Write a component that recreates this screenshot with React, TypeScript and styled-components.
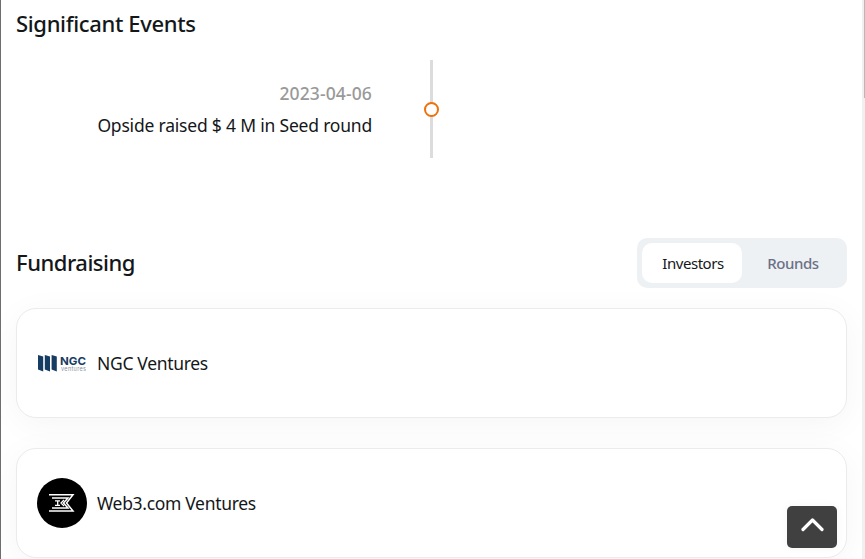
import React from "react";
import styled, { createGlobalStyle } from "styled-components";

const GlobalStyle = createGlobalStyle`
  * { box-sizing: border-box; }
  body {
    margin: 0;
    overflow: hidden;
    background: #fff;
    color: #141719;
    font-family: "Noto Sans", "Open Sans", sans-serif;
  }
`;

const Page = styled.div`
  display: grid;
  grid-template-columns: minmax(0, 1fr) 3px;
  height: 559px;
  overflow: hidden;
  border-left: 1px solid #6e6e70;
`;

const Content = styled.main`
  padding: 0 15px;
`;

const ScrollTrack = styled.div`
  display: flex;
  justify-content: flex-end;
  background: #f0f0f0;
`;

const ScrollThumb = styled.div`
  width: 1px;
  height: 98px;
  background: #b8b8b8;
`;

const Heading = styled.h2<{ $spacing: string }>`
  margin: 0;
  font-size: 22px;
  font-weight: 500;
  line-height: 30px;
  letter-spacing: ${(p) => p.$spacing};
  white-space: nowrap;
`;

const EventsSection = styled.section`
  height: 238px;
  padding-top: 8px;
`;

const Timeline = styled.div`
  display: grid;
  grid-template-columns: 356px 119px;
  height: 98px;
  margin-top: 22px;
`;

const Event = styled.div`
  display: flex;
  flex-direction: column;
  align-items: flex-end;
  padding-top: 17px;
  line-height: 32px;
  white-space: nowrap;
`;

const EventDate = styled.time`
  color: #999;
  font-size: 17.5px;
  font-weight: 500;
  letter-spacing: 0.12px;
`;

const EventTitle = styled.div`
  font-size: 17.5px;
  letter-spacing: -0.2px;
`;

const Rail = styled.div`
  display: flex;
  align-items: center;
  justify-content: center;
  background: linear-gradient(#dcdcdc, #dcdcdc) center / 3px 100% no-repeat;
`;

const RailDot = styled.div`
  width: 15px;
  height: 15px;
  border: 2px solid #ee720c;
  border-radius: 50%;
  background: #fff;
`;

const FundHeader = styled.header`
  display: flex;
  align-items: center;
  justify-content: space-between;
  height: 50px;
  margin-bottom: 20px;

  ${Heading} {
    padding-bottom: 2px;
  }
`;

const Tabs = styled.div`
  display: flex;
  width: 210px;
  height: 50px;
  padding: 5px;
  border-radius: 10px;
  background: #eef1f4;
`;

const Tab = styled.button<{ $active?: boolean }>`
  flex: 1;
  padding: 0 0 0 2px;
  border: 0;
  border-radius: 10px;
  background: ${(p) => (p.$active ? "#fff" : "transparent")};
  color: ${(p) => (p.$active ? "#141719" : "#6b7086")};
  font: ${(p) => (p.$active ? 400 : 500)} 15px "Noto Sans", sans-serif;
  letter-spacing: -0.45px;
`;

const Card = styled.article`
  display: flex;
  align-items: center;
  gap: 10px;
  height: 110px;
  margin-bottom: 30px;
  padding: 0 20px;
  border: 1px solid #ebebeb;
  border-radius: 20px;
  background: #fff;
  box-shadow: 0 6px 34px rgba(0, 0, 0, 0.045);
`;

const Logo = styled.svg`
  display: block;
  flex: none;
  width: 50px;
  height: 50px;
`;

const InvestorName = styled.div`
  padding-bottom: 1px;
  font-size: 17.5px;
  line-height: 24px;
  letter-spacing: -0.32px;
`;

const TopButton = styled.button`
  position: fixed;
  right: 28px;
  bottom: 11px;
  display: grid;
  place-items: center;
  width: 50px;
  height: 42px;
  padding: 0 0 4px;
  border: 0;
  border-radius: 5px;
  background: #404040;
  box-shadow: 0 0 10px rgba(0, 0, 0, 0.05);
`;

function NgcLogo() {
  return (
    <Logo viewBox="0 0 50 50" aria-label="NGC Ventures">
      <g fill="#173c63">
        <path d="M1 17l5.2 1.6v15L1 31.5z" />
        <path d="M7.8 17l5.2 1.6v15l-5.2-2.1z" />
        <path d="M14.6 17l5.2 1.6v15l-5.2-2.1z" />
      </g>
      <text x="23" y="27" fill="#173c63" fontFamily="Inter, sans-serif" fontSize="11" fontWeight="700" textLength="26" lengthAdjust="spacingAndGlyphs">NGC</text>
      <text x="24" y="32.5" fill="#8692a2" fontFamily="Inter, sans-serif" fontSize="5.5" textLength="25">ventures</text>
    </Logo>
  );
}

function Web3Logo() {
  return (
    <Logo viewBox="0 0 50 50" aria-label="Web3.com Ventures">
      <circle cx="25" cy="25" r="25" fill="#000" />
      <g fill="none" stroke="#fff" strokeWidth="1.5">
        <path d="M12 16.8H36L29.5 25L36 33H12" />
        <path d="M15 20H31L26.5 25L31 30H15" />
        <path d="M18 22.8H23M18 27.4H23M20.7 22.8v4.6M27 22L24 25L27 28" strokeWidth="1.3" />
      </g>
    </Logo>
  );
}

export default function App() {
  return (
    <>
      <GlobalStyle />
      <Page>
        <Content>
          <EventsSection>
            <Heading $spacing="-0.35px">Significant Events</Heading>
            <Timeline>
              <Event>
                <EventDate>2023-04-06</EventDate>
                <EventTitle>Opside raised $ 4 M in Seed round</EventTitle>
              </Event>
              <Rail>
                <RailDot />
              </Rail>
            </Timeline>
          </EventsSection>
          <FundHeader>
            <Heading $spacing="-0.48px">Fundraising</Heading>
            <Tabs>
              <Tab $active>Investors</Tab>
              <Tab>Rounds</Tab>
            </Tabs>
          </FundHeader>
          <Card>
            <NgcLogo />
            <InvestorName>NGC Ventures</InvestorName>
          </Card>
          <Card>
            <Web3Logo />
            <InvestorName>Web3.com Ventures</InvestorName>
          </Card>
        </Content>
        <ScrollTrack>
          <ScrollThumb />
        </ScrollTrack>
      </Page>
      <TopButton aria-label="Back to top">
        <svg width="24" height="16" viewBox="0 0 24 16" fill="none" stroke="#fff" strokeWidth="3.2" strokeLinecap="round" strokeLinejoin="round">
          <path d="M3 12.5L12.5 3L22 12.5" />
        </svg>
      </TopButton>
    </>
  );
}
